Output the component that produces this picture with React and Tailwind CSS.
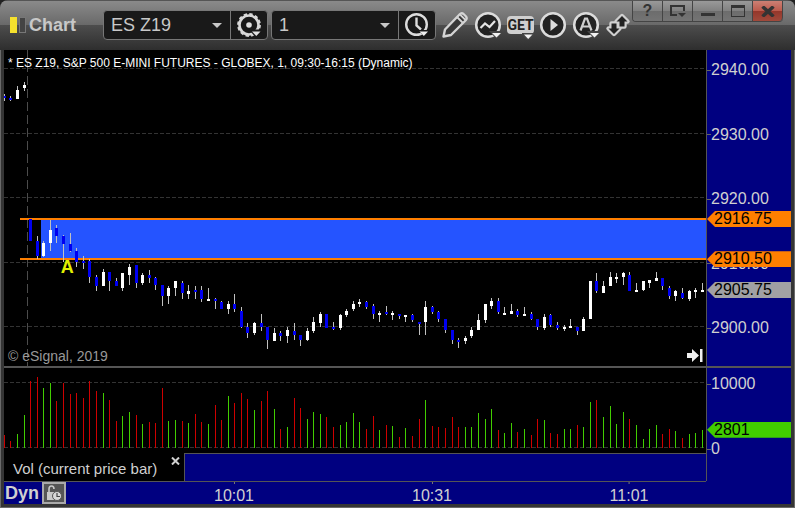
import React, { useState } from 'react';

// [high, body top, body bottom, low, rising, volume], one entry per minute
const bars = [
    [94, 96, 98, 101, 0, 13], [96, 98, 100, 101, 0, 7], [86, 90, 99, 99, 1, 14], [82, 85, 88, 91, 1, 33],
    [219, 219, 241, 241, 0, 67], [236, 241, 256, 259, 0, 71], [241, 243, 256, 257, 1, 60], [220, 230, 243, 251, 1, 65],
    [225, 228, 236, 243, 0, 47], [235, 236, 244, 262, 0, 65], [233, 244, 251, 252, 0, 54], [248, 251, 262, 267, 0, 55],
    [256, 261, 263, 269, 0, 50], [259, 261, 277, 283, 0, 67], [275, 277, 286, 291, 0, 57], [269, 272, 286, 286, 1, 55],
    [272, 272, 281, 291, 0, 48], [278, 281, 286, 286, 0, 27], [273, 273, 288, 291, 1, 32], [264, 267, 275, 285, 1, 36],
    [265, 265, 283, 288, 0, 33], [273, 275, 283, 285, 1, 24], [270, 275, 278, 283, 0, 26], [277, 278, 285, 290, 0, 25],
    [285, 285, 296, 306, 0, 60], [286, 288, 296, 304, 1, 27], [281, 281, 288, 296, 1, 28], [281, 283, 293, 299, 0, 27],
    [285, 291, 294, 299, 1, 25], [286, 290, 292, 299, 0, 34], [286, 290, 299, 302, 0, 26], [288, 299, 301, 301, 1, 24],
    [298, 299, 301, 309, 0, 43], [301, 302, 309, 309, 0, 28], [301, 304, 309, 314, 1, 52], [294, 304, 309, 312, 0, 45],
    [307, 311, 327, 328, 0, 55], [323, 327, 333, 338, 0, 49], [322, 323, 333, 335, 1, 38], [314, 323, 327, 331, 0, 47],
    [327, 327, 340, 349, 0, 57], [328, 333, 341, 341, 1, 39], [331, 333, 336, 341, 0, 19], [327, 330, 336, 343, 1, 21],
    [323, 331, 335, 340, 0, 50], [335, 335, 340, 346, 0, 40], [328, 331, 340, 341, 1, 29], [317, 322, 331, 333, 1, 36],
    [312, 314, 323, 327, 1, 34], [314, 314, 328, 328, 0, 31], [322, 327, 329, 330, 0, 21], [314, 315, 328, 330, 1, 23],
    [309, 311, 315, 317, 1, 26], [301, 304, 309, 311, 1, 35], [299, 302, 304, 307, 1, 26], [301, 302, 307, 309, 0, 19],
    [304, 306, 314, 319, 0, 32], [311, 313, 315, 322, 1, 18], [306, 312, 314, 315, 0, 23], [311, 313, 315, 320, 1, 22],
    [314, 314, 316, 319, 0, 11], [315, 315, 317, 322, 1, 20], [314, 315, 320, 322, 0, 12], [322, 322, 324, 335, 0, 29],
    [301, 307, 322, 335, 1, 48], [306, 307, 312, 314, 0, 22], [311, 312, 319, 322, 0, 21], [319, 319, 330, 333, 0, 20],
    [330, 330, 340, 344, 0, 31], [338, 340, 342, 348, 0, 21], [336, 338, 341, 344, 1, 21], [327, 330, 336, 338, 1, 21],
    [314, 320, 330, 330, 1, 35], [304, 304, 320, 323, 1, 29], [298, 301, 306, 309, 1, 39], [298, 301, 312, 314, 0, 18],
    [307, 313, 315, 315, 1, 15], [304, 311, 314, 314, 1, 25], [309, 311, 315, 317, 0, 16], [307, 314, 316, 316, 1, 19],
    [312, 314, 319, 320, 0, 13], [319, 319, 327, 330, 0, 29], [314, 317, 328, 330, 1, 28], [314, 315, 325, 327, 0, 15],
    [322, 325, 328, 330, 0, 14], [325, 327, 329, 331, 1, 19], [319, 326, 328, 328, 1, 19], [327, 327, 331, 335, 0, 23],
    [317, 319, 331, 331, 1, 21], [281, 281, 319, 319, 1, 46], [273, 281, 291, 293, 0, 48], [281, 286, 293, 293, 1, 31],
    [272, 277, 286, 286, 1, 42], [273, 277, 279, 283, 1, 24], [272, 273, 277, 285, 1, 36], [272, 275, 291, 291, 0, 29],
    [283, 290, 292, 292, 1, 23], [281, 281, 290, 291, 1, 9], [280, 280, 283, 288, 1, 19], [272, 278, 281, 281, 1, 23],
    [278, 278, 286, 290, 0, 14], [286, 288, 296, 299, 0, 19], [290, 291, 296, 301, 1, 17], [288, 293, 298, 299, 0, 10],
    [290, 291, 299, 301, 1, 14], [288, 290, 292, 298, 1, 15], [283, 290, 292, 292, 1, 18],
];

const TOP = 50;
const PLOT_W = 702;
const PRICE_H = 316;
const VOL_H = 85;

const barX = (i) => Math.floor(0.3 + i * 6.585);
const priceTop = (price) => `${((19 + (2940 - price) * 6.45) / PRICE_H) * 100}%`;
const volTop = (vol) => `${((80 - vol * 0.0065) / VOL_H) * 100}%`;

const GridLine = ({ y }) => (
    <line x1="0" x2={PLOT_W} y1={y + 0.5} y2={y + 0.5} stroke="#333" strokeDasharray="4 2" />
);

const PricePlot = () => (
    <svg
        className="block h-full w-full"
        viewBox={`0 0 ${PLOT_W} ${PRICE_H}`}
        preserveAspectRatio="none"
        shapeRendering="crispEdges"
        role="img"
        aria-label="One minute candles"
    >
        {[18, 83, 147, 212, 276].map((y) => <GridLine key={y} y={y} />)}
        <line x1="23.5" x2="23.5" y1="0" y2={PRICE_H} stroke="#4c4c4c" strokeDasharray="9 4" />
        <rect x="37" y="170" width="665" height="38" fill="#2554ff" />
        <rect x="16" y="168" width="686" height="2" fill="#ff7f00" />
        <rect x="16" y="208" width="686" height="2" fill="#ff7f00" />
        {bars.map(([high, top, bottom, low, up], i) => (
            <g key={i}>
                <rect x={barX(i)} y={high - TOP} width="1" height={low - high} fill="#c0c0c0" />
                <rect x={barX(i) - 1} y={top - TOP} width="3" height={bottom - top} fill={up ? '#fff' : '#0000f0'} />
            </g>
        ))}
    </svg>
);

const VolumePlot = () => (
    <svg
        className="block h-full w-full"
        viewBox={`0 0 ${PLOT_W} ${VOL_H}`}
        preserveAspectRatio="none"
        shapeRendering="crispEdges"
        role="img"
        aria-label="Volume"
    >
        <GridLine y={14} />
        <GridLine y={79} />
        {bars.map((bar, i) => (
            <rect key={i} x={barX(i)} y={80 - bar[5]} width="1" height={bar[5]} fill={bar[4] ? '#41cd00' : '#cd0000'} />
        ))}
    </svg>
);

const AxisLabel = ({ top, children }) => (
    <div className="absolute left-0 flex -translate-y-1/2 items-center pt-0.5 text-base leading-4 text-[#d0d0d0]" style={{ top }}>
        <span className="h-px w-1 bg-[#666]" />
        {children}
    </div>
);

const tagColors = {
    orange: 'bg-[#ff7f00]',
    gray: 'bg-[#a0a0a4]',
    green: 'bg-[#41cd00]',
};

const AxisTag = ({ top, color, children }) => (
    <div
        className={`absolute left-0 right-0 -translate-y-1/2 pl-[7px] text-base leading-4 text-black [clip-path:polygon(0_50%,8px_0,100%_0,100%_100%,8px_100%)] ${tagColors[color]}`}
        style={{ top }}
    >
        {children}
    </div>
);

const Combo = ({ label, value, options, button, children }) => {
    const [selected, setSelected] = useState(value);

    return (
        <div className="flex h-[30px] w-[165px] overflow-hidden rounded border border-[#777] bg-[#191919]">
            <div className="relative flex flex-1 border-r border-[#777]">
                <select
                    aria-label={label}
                    className="w-full appearance-none bg-transparent pl-[7px] text-lg leading-7 text-[#c8c8c8] outline-none"
                    value={selected}
                    onChange={(e) => setSelected(e.target.value)}
                >
                    {options.map((o) => <option key={o}>{o}</option>)}
                </select>
                <svg className="pointer-events-none absolute right-2 top-3 h-[5px] w-2.5" viewBox="0 0 10 5" fill="#c8c8c8">
                    <path d="M0 0h10L5 5z" />
                </svg>
            </div>
            <button type="button" aria-label={button} className="flex w-9 items-center justify-center">
                {children}
            </button>
        </div>
    );
};

const GearIcon = () => (
    <svg width="26" height="26" viewBox="0 0 26 26" fill="none" stroke="#d8d8d8">
        <circle cx="13" cy="13" r="9.5" strokeWidth="2.600" />
        <circle cx="13" cy="13" r="11" strokeWidth="1.800" strokeDasharray="3.400 2.360" />
        <circle cx="13" cy="13" r="2.8" fill="#e0e0e0" stroke="none" />
        <path d="M13 17.500h13v2l-6 6.500z" fill="#191919" stroke="none" />
        <path d="M16 19.500h8.500l-4.200 4.500z" fill="#e0e0e0" stroke="none" />
    </svg>
);

const ClockIcon = () => (
    <svg width="26" height="26" viewBox="0 0 26 26" fill="none" stroke="#dcdcdc" strokeWidth="2.400">
        <circle cx="12.500" cy="12.500" r="10.300" />
        <path d="M12.500 5.500v8l4.500 4" />
        <path d="M14 18h13l-6 7.500z" fill="#191919" stroke="none" />
        <path d="M15.500 19.500h8.500l-4.200 4.500z" fill="#eee" stroke="none" />
    </svg>
);

const PencilIcon = () => (
    <svg width="28" height="28" viewBox="0 0 28 28" fill="#383838" stroke="#d4d4d4" strokeWidth="2.400" strokeLinejoin="round">
        <path d="M2.500 25.500L4 18.500L18.500 3.500Q20.500 1.500 22.500 3L25 5.500Q26.500 7.500 24.500 9.500L10 24z" />
        <path d="M16 6l6 6M19 3.500L25 9.500" strokeWidth="1.800" />
    </svg>
);

const RoundIcon = ({ children, menu }) => (
    <svg width="28" height="28" viewBox="0 0 28 28" fill="none">
        <circle cx="14" cy="14" r="11.800" fill="#222" stroke="#dcdcdc" strokeWidth="2.500" />
        {children}
        {menu && (
            <>
                <path d="M15 20h13v2.500l-5.500 5.500z" fill="#444" />
                <path d="M18 22h9l-4.500 4.500z" fill="#f2f2f2" />
            </>
        )}
    </svg>
);

const GetIcon = () => (
    <span className="relative block h-[18px] w-[27px] rounded bg-[#cfcfcf] text-center font-['Roboto',sans-serif] text-sm font-bold leading-[18px] text-[#222]">
        GET
        <svg className="absolute -bottom-1.5 right-0 h-[7px] w-3" viewBox="0 0 12 7">
            <path d="M0 0h12v2L7 7H5L0 2z" fill="#444" />
            <path d="M2 1.500h8.500L6.200 6z" fill="#f2f2f2" />
        </svg>
    </span>
);

const SwapIcon = () => (
    <svg width="26" height="26" viewBox="0 0 26 26" strokeLinejoin="round">
        <g fill="#222" stroke="#cfcfcf" strokeWidth="4.400">
            <path d="M9 22l-5.500-5.500H6.500V11.500h5v5h3z" />
            <path d="M17 4l5.500 5.500h-3v5h-5v-5h-3z" />
        </g>
        <g fill="#222">
            <path d="M9 22l-5.500-5.500H6.500V11.500h5v5h3z" />
            <path d="M17 4l5.500 5.500h-3v5h-5v-5h-3z" />
        </g>
    </svg>
);

const WindowButton = ({ label, children, close }) => (
    <button
        type="button"
        aria-label={label}
        className={`flex w-[30px] items-center justify-center border-r border-[#444] last:rounded-br ${
            close
                ? 'bg-[linear-gradient(#cc8074,#bb5a4c_50%,#94362a_50%,#a04a3c)]'
                : 'bg-[linear-gradient(#999,#808080_50%,#6c6c6c_50%,#747474)]'
        }`}
    >
        {children}
    </button>
);

const Toolbar = () => (
    <header className="relative flex h-[50px] items-center bg-[linear-gradient(#555_1px,#8a8a8a_1px,#696969_25px,#4d4d4d_25px,#2e2e2e)] pl-2.5">
        <div className="flex w-[93px] items-center">
            <span className="h-4 w-[7px] bg-[#f5e12d]" />
            <span className="ml-0.5 h-4 w-[7px] border border-[#777] bg-[#444]" />
            <h1 className="ml-[3px] text-lg font-bold leading-5 text-[#c8c8c8]">Chart</h1>
        </div>
        <div className="flex items-center gap-[3px]">
            <Combo label="Symbol" value="ES Z19" options={['ES Z19', 'ES H20', 'NQ Z19']} button="Symbol settings">
                <GearIcon />
            </Combo>
            <Combo label="Interval" value="1" options={['1', '5', '15', '60']} button="Time template">
                <ClockIcon />
            </Combo>
        </div>
        <div className="flex items-center gap-[5px] pl-[5px]">
            <button type="button" aria-label="Drawing tools"><PencilIcon /></button>
            <button type="button" aria-label="Studies">
                <RoundIcon menu><path d="M6.500 17l4.500-4.500l4.500 3.500l5.500-6" stroke="#e4e4e4" strokeWidth="2.200" /></RoundIcon>
            </button>
            <button type="button" aria-label="GET studies"><GetIcon /></button>
            <button type="button" aria-label="Replay">
                <RoundIcon><path d="M11.500 8l7.500 6l-7.500 6z" fill="#dcdcdc" /></RoundIcon>
            </button>
            <button type="button" aria-label="Alerts">
                <RoundIcon menu><path d="M8.500 19.500L13 7.500h2l4.500 12M10 15.500h8" stroke="#cfcfcf" strokeWidth="2.200" /></RoundIcon>
            </button>
            <button type="button" aria-label="Trade"><SwapIcon /></button>
        </div>
        <div className="absolute right-3 top-px flex h-[21px] overflow-hidden rounded-b border-b border-l border-[#444]">
            <WindowButton label="Help">
                <span className="text-base font-bold leading-4 text-[#333]">?</span>
            </WindowButton>
            <WindowButton label="Window menu">
                <svg width="16" height="14" viewBox="0 0 16 14" fill="none" stroke="#333" strokeWidth="2">
                    <path d="M7 11H1V2h13v5" />
                    <path d="M8 9h8l-4 4z" fill="#333" stroke="none" />
                </svg>
            </WindowButton>
            <WindowButton label="Minimize"><span className="mt-1.5 h-[3px] w-3.5 bg-[#333]" /></WindowButton>
            <WindowButton label="Maximize"><span className="h-3 w-3.5 border border-t-[3px] border-[#333]" /></WindowButton>
            <WindowButton label="Close" close>
                <svg width="14" height="11" viewBox="0 0 14 11" stroke="#333" strokeWidth="3.500">
                    <path d="M1.500 .5l11 10M12.500 .5l-11 10" />
                </svg>
            </WindowButton>
        </div>
    </header>
);

const times = [
    { label: '10:01', bar: 35 },
    { label: '10:31', bar: 65 },
    { label: '11:01', bar: 95 },
];

const App = () => {
    const [locked, setLocked] = useState(false);
    const [showTab, setShowTab] = useState(true);

    return (
        <div className="h-screen bg-[#222] font-['Liberation_Sans',Arial,sans-serif]">
            <main className="flex h-full flex-col overflow-hidden rounded-t-lg bg-[#353535]">
                <Toolbar />
                <div className="flex min-h-0 flex-1 flex-col border-x border-b border-[#6a6a6a] px-[3px] pb-[3px]">
                    <section className="grid min-h-0 flex-1 grid-cols-[1fr_85px] bg-black">
                        <div className="relative min-h-0">
                            <PricePlot />
                            <h2 className="absolute left-1 top-[5px] text-xs leading-4 text-white">
                                * ES Z19, S&amp;P 500 E-MINI FUTURES - GLOBEX, 1, 09:30-16:15 (Dynamic)
                            </h2>
                            <span className="absolute left-[8.100%] top-[66%] text-lg font-bold leading-4 text-[#e1f000]">A</span>
                            <p className="absolute bottom-0.5 left-1 text-sm leading-4 text-[#999]">© eSignal, 2019</p>
                            <button type="button" aria-label="Go to latest bar" className="absolute bottom-1 right-[3px]">
                                <svg width="16" height="13" viewBox="0 0 16 13" fill="#f0f0f0">
                                    <path d="M0 4h5V0l7 6.500L5 13V9H0zM13 0h2.500v13h-2.500z" />
                                </svg>
                            </button>
                        </div>
                        <div className="relative overflow-hidden border-l border-[#555] bg-[#000080]">
                            {[2940, 2930, 2920, 2910, 2900].map((p) => (
                                <AxisLabel key={p} top={priceTop(p)}>{p.toFixed(2)}</AxisLabel>
                            ))}
                            <AxisTag top={priceTop(2916.75)} color="orange">2916.75</AxisTag>
                            <AxisTag top={priceTop(2910.5)} color="orange">2910.50</AxisTag>
                            <AxisTag top={priceTop(2905.75)} color="gray">2905.75</AxisTag>
                        </div>
                    </section>
                    <section className="grid h-[87px] shrink-0 grid-cols-[1fr_85px] border-t-2 border-[#555] bg-black">
                        <VolumePlot />
                        <div className="relative border-l border-[#555] bg-[#000080]">
                            <AxisLabel top={volTop(10000)}>10000</AxisLabel>
                            <AxisLabel top={volTop(0)}>0</AxisLabel>
                            <AxisTag top={volTop(2801)} color="green">2801</AxisTag>
                        </div>
                    </section>
                    <div className="grid shrink-0 grid-cols-[1fr_85px] bg-[#000080]">
                        <div className="flex h-7">
                            {showTab && (
                                <div className="flex w-[181px] items-start justify-between border-r border-[#555] bg-black pl-[9px] pr-1">
                                    <span className="pt-[7px] text-[15px] leading-[18px] text-[#d0d0d0]">Vol (current price bar)</span>
                                    <button type="button" aria-label="Close tab" className="pt-1" onClick={() => setShowTab(false)}>
                                        <svg width="9" height="8" viewBox="0 0 9 8" stroke="#d0d0d0" strokeWidth="2">
                                            <path d="M1 .5l7 7M8 .5l-7 7" />
                                        </svg>
                                    </button>
                                </div>
                            )}
                            <div className="flex-1 border-t border-[#555]" />
                        </div>
                        <div className="border-l border-[#555]" />
                    </div>
                    <footer className="grid h-[23px] shrink-0 grid-cols-[1fr_85px] bg-[#000080]">
                        <div className="relative flex items-center gap-[3px] border-t border-[#555] pl-px">
                            <span className="text-lg font-bold leading-5 text-[#d0d0d0]">Dyn</span>
                            <button
                                type="button"
                                aria-label="Lock time range"
                                aria-pressed={locked}
                                onClick={() => setLocked(!locked)}
                                className="flex h-[22px] w-6 items-center justify-center border-2 border-[#aaa] bg-[#555]"
                            >
                                <svg width="16" height="16" viewBox="0 0 16 16" fill="none">
                                    <path d="M3 7V4Q3 1 5.500 1T8 4" stroke="#c8c8c8" strokeWidth="1.600" />
                                    <rect x="1" y="7" width="8" height="8" fill="#c8c8c8" />
                                    <circle cx="11" cy="11" r="4.500" fill="#d8d8d8" stroke="#555" />
                                    <path d="M11 8v3.500h3" stroke="#444" strokeWidth="1.200" />
                                </svg>
                            </button>
                            {times.map((t) => (
                                <div
                                    key={t.label}
                                    className="absolute top-0 flex -translate-x-1/2 flex-col items-center text-base leading-4 text-[#d0d0d0]"
                                    style={{ left: `${(barX(t.bar) / PLOT_W) * 100}%` }}
                                >
                                    <span className="mb-1 h-0.5 w-px bg-[#777]" />
                                    {t.label}
                                </div>
                            ))}
                        </div>
                        <div />
                    </footer>
                </div>
            </main>
        </div>
    );
};

export default App;
